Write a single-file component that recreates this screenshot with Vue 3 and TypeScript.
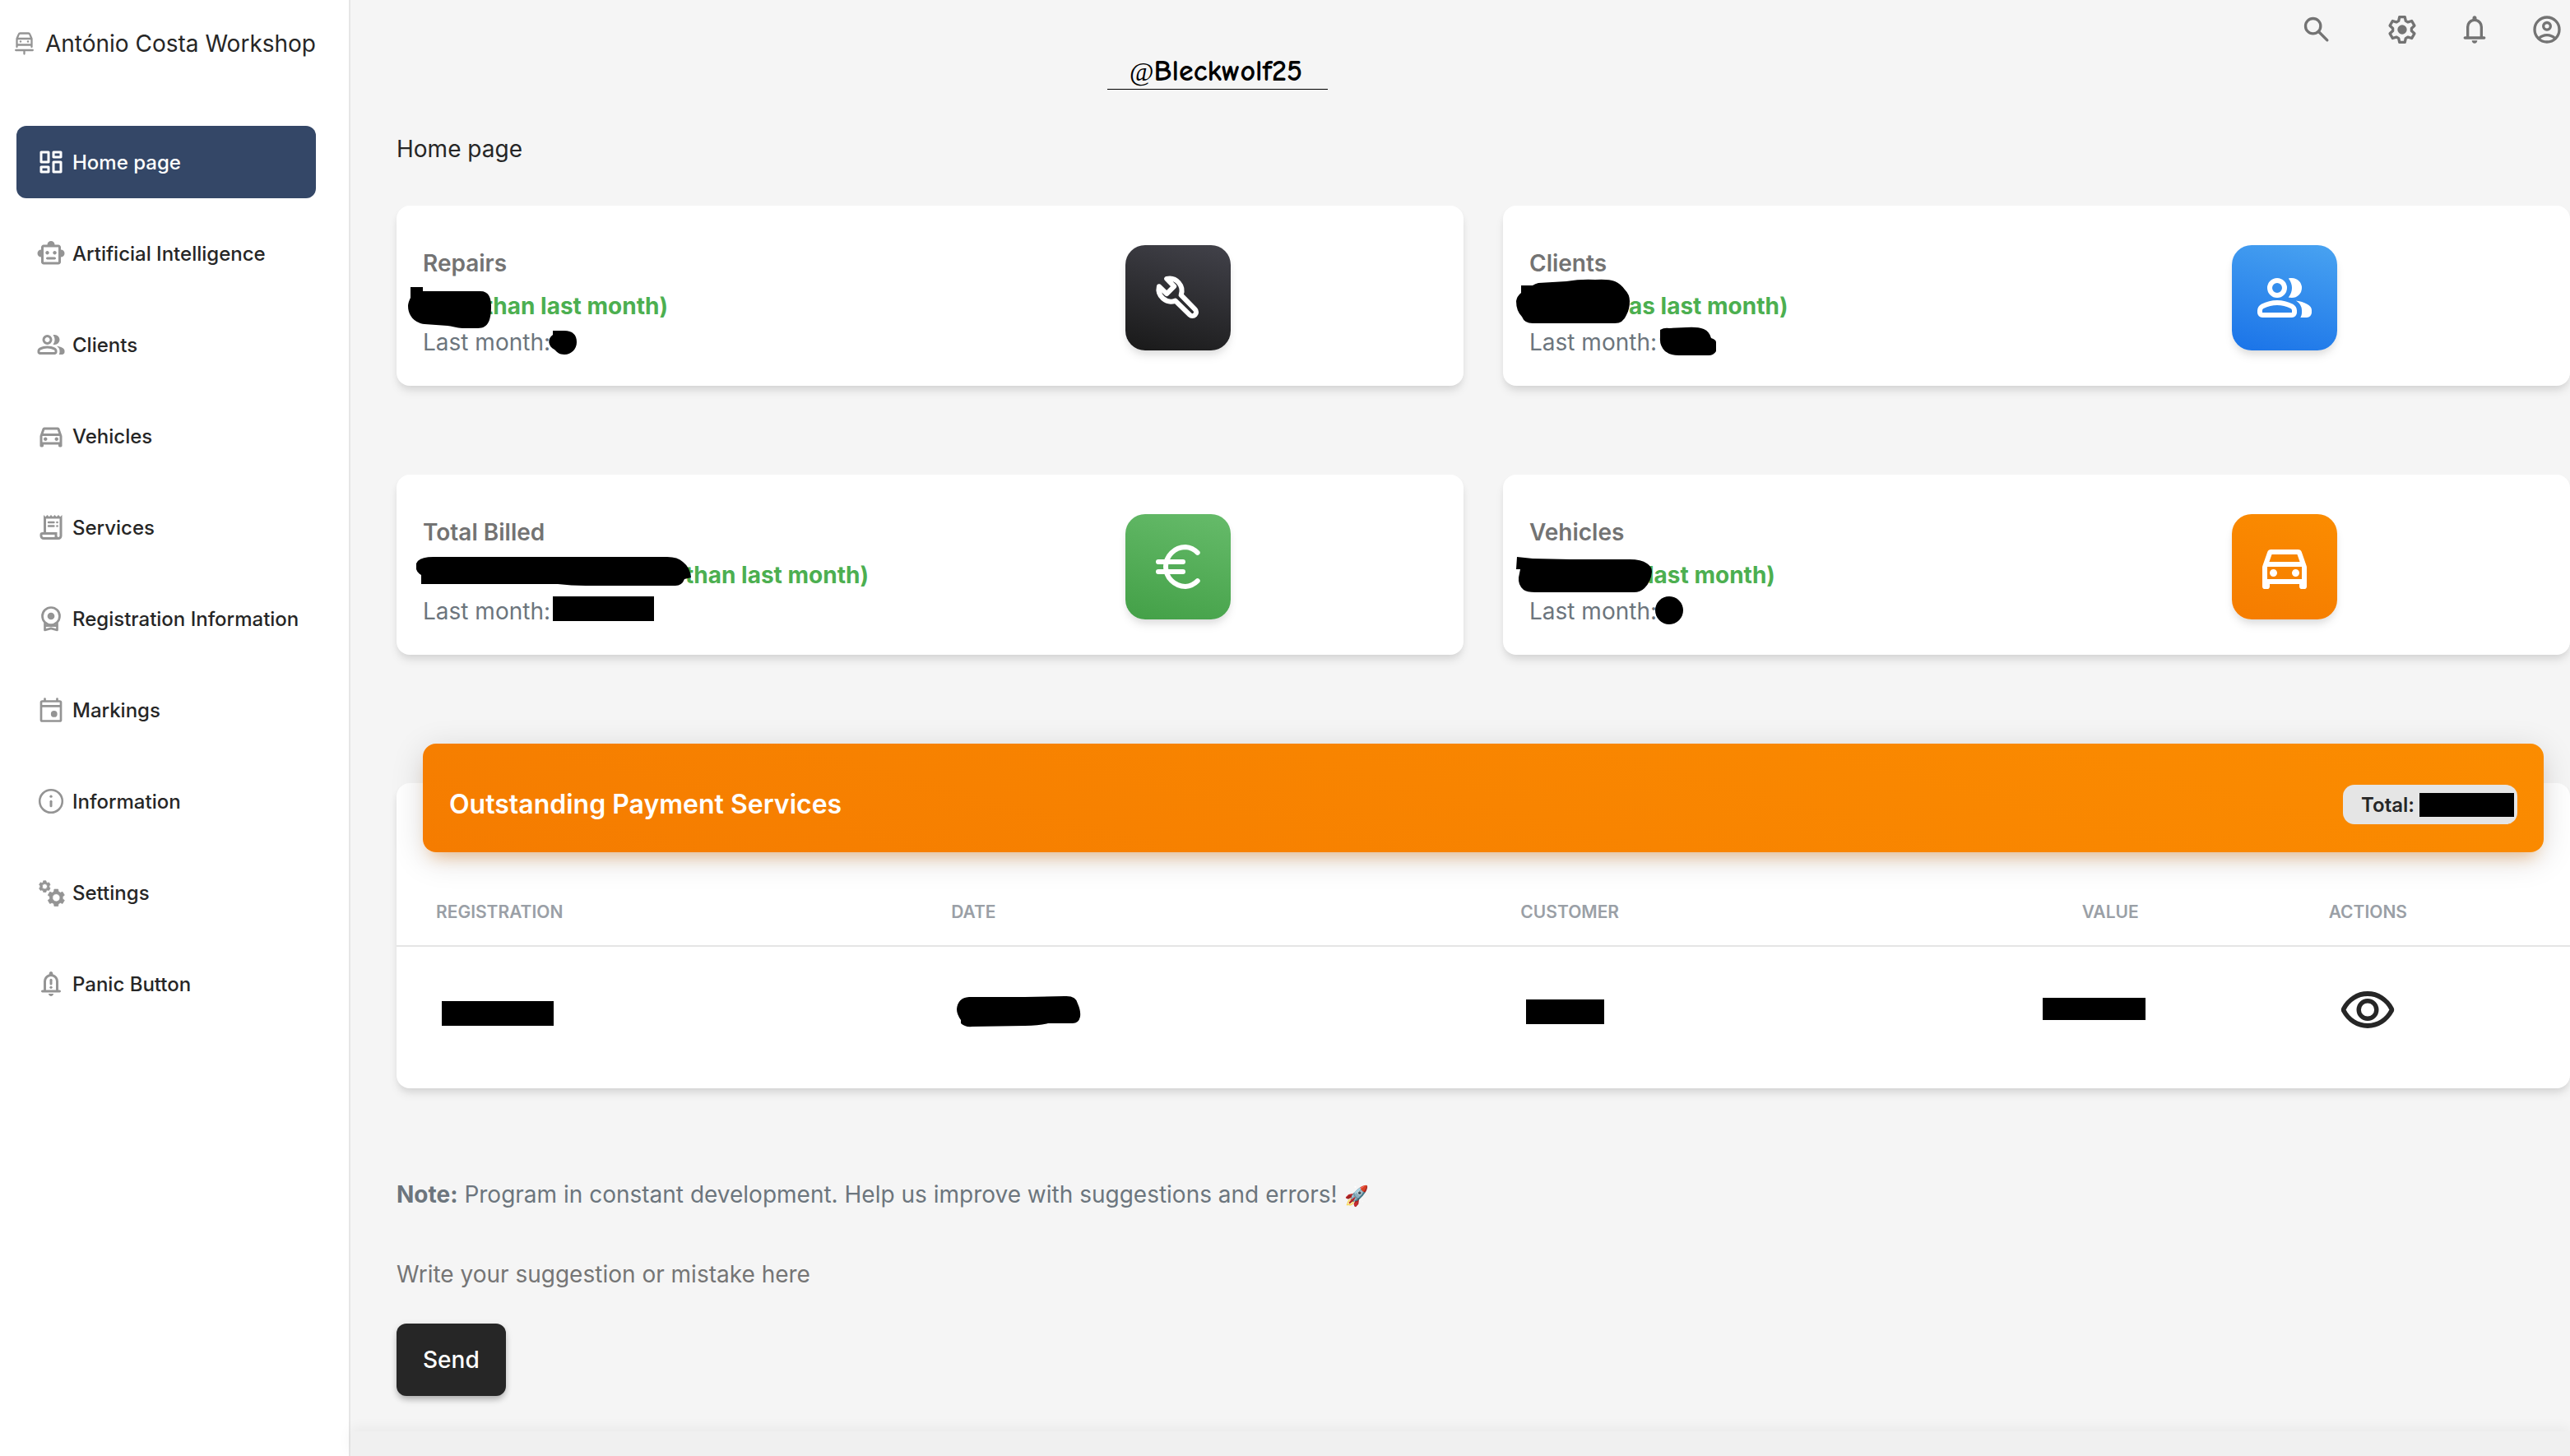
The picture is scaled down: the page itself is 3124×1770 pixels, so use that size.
<script setup lang="ts">
import { h, type FunctionalComponent } from 'vue'

interface Shape {
  d: string
  stroke?: number
}

interface StatCard {
  title: string
  trend: string
  hidden: number
  tone: string
  icon: string
  marks: string[]
}

const disc = (cx: number, cy: number, r: number): string =>
  `M${cx - r} ${cy}a${r} ${r} 0 1 0 ${2 * r} 0a${r} ${r} 0 1 0 ${-2 * r} 0z`

// Six-toothed cog; the angles are half widths of a tooth, in degrees
const cog = (cx: number, cy: number, outer: number, inner: number, tip: number, base: number): string => {
  const at = (deg: number, r: number): string => {
    const a = ((deg - 90) * Math.PI) / 180
    return `${(cx + r * Math.cos(a)).toFixed(2)} ${(cy + r * Math.sin(a)).toFixed(2)}`
  }
  const points: string[] = []
  for (let i = 0; i < 6; i++) {
    const mid = i * 60
    points.push(at(mid - base, inner), at(mid - tip, outer), at(mid + tip, outer), at(mid + base, inner))
  }
  return `M${points.join('L')}Z`
}

const bell =
  'M5 19q-.425 0-.712-.288T4 18t.288-.712T5 17h1v-7q0-2.075 1.25-3.687T10.5 4.2v-.7q0-.625.438-1.062T12 2t1.063.438T13.5 3.5v.7q2 .5 3.25 2.113T18 10v7h1q.425 0 .713.288T20 18t-.288.713T19 19zm7 3q-.825 0-1.412-.587T10 20h4q0 .825-.587 1.413T12 22m-4-5h8v-7q0-1.65-1.175-2.825T12 6T9.175 7.175T8 10z'

const icons: Record<string, Shape[]> = {
  dashboard: [
    {
      d: 'M13 8V4q0-.425.288-.712T14 3h6q.425 0 .713.288T21 4v4q0 .425-.288.713T20 9h-6q-.425 0-.712-.288T13 8M3 12V4q0-.425.288-.712T4 3h6q.425 0 .713.288T11 4v8q0 .425-.288.713T10 13H4q-.425 0-.712-.288T3 12m10 8v-8q0-.425.288-.712T14 11h6q.425 0 .713.288T21 12v8q0 .425-.288.713T20 21h-6q-.425 0-.712-.288T13 20M3 20v-4q0-.425.288-.712T4 15h6q.425 0 .713.288T11 16v4q0 .425-.288.713T10 21H4q-.425 0-.712-.288T3 20m2-9h4V5H5zm10 8h4v-6h-4zm0-12h4V5h-4zM5 19h4v-2H5z',
    },
  ],
  robot: [
    {
      d: 'M4 15q-1.25 0-2.125-.875T1 12t.875-2.125T4 9V7q0-.825.588-1.412T6 5h3q0-1.25.875-2.125T12 2t2.125.875T15 5h3q.825 0 1.413.588T20 7v2q1.25 0 2.125.875T23 12t-.875 2.125T20 15v4q0 .825-.587 1.413T18 21H6q-.825 0-1.412-.587T4 19zm5-2q.625 0 1.063-.437T10.5 11.5t-.437-1.062T9 10t-1.062.438T7.5 11.5t.438 1.063T9 13m6 0q.625 0 1.063-.437T16.5 11.5t-.437-1.062T15 10t-1.062.438T13.5 11.5t.438 1.063T15 13m-6 4h6q.425 0 .713-.288T16 16t-.288-.712T15 15H9q-.425 0-.712.288T8 16t.288.713T9 17m-3 2h12V7H6z',
    },
  ],
  group: [
    {
      d: 'M1 17.2q0-.85.438-1.562T2.6 14.55q1.55-.775 3.15-1.162T9 13t3.25.388t3.15 1.162q.725.375 1.163 1.088T17 17.2v.8q0 .825-.587 1.413T15 20H3q-.825 0-1.412-.587T1 18zM18.45 20q.275-.45.413-.962T19 18v-1q0-1.1-.612-2.113T16.65 13.15q1.275.15 2.4.513t2.1.887q.9.5 1.375 1.112T23 17v1q0 .825-.587 1.413T21 20zM9 12q-1.65 0-2.825-1.175T5 8t1.175-2.825T9 4t2.825 1.175T13 8t-1.175 2.825T9 12m10-4q0 1.65-1.175 2.825T15 12q-.275 0-.7-.062t-.7-.138q.675-.8 1.038-1.775T15 8t-.362-2.025T13.6 4.2q.35-.125.7-.162T15 4q1.65 0 2.825 1.175T19 8M3 18h12v-.8q0-.275-.137-.5t-.363-.35q-1.35-.675-2.725-1.012T9 15t-2.775.338T3.5 16.35q-.225.125-.363.35T3 17.2zm6-8q.825 0 1.413-.587T11 8t-.587-1.412T9 6t-1.412.588T7 8t.588 1.413T9 10',
    },
  ],
  car: [
    {
      d: 'M6 19v1q0 .425-.288.713T5 21H4q-.425 0-.712-.288T3 20v-7.675q0-.175.025-.35t.075-.325l1.975-5.675q.15-.45.538-.712T6.475 5h11.05q.475 0 .863.263t.537.712L20.9 11.65q.05.15.075.325t.025.35V20q0 .425-.288.713T20 21h-1q-.425 0-.712-.288T18 20v-1zm-.2-9h12.4l-1.05-3H6.85zM7.5 16q.625 0 1.063-.437T9 14.5t-.437-1.062T7.5 13t-1.062.438T6 14.5t.438 1.063T7.5 16m9 0q.625 0 1.063-.437T18 14.5t-.437-1.062T16.5 13t-1.062.438T15 14.5t.438 1.063T16.5 16M5 17h14v-5H5z',
    },
  ],
  receipt: [
    {
      d: 'M6 2l1.5 1.5L9 2l1.5 1.5L12 2l1.5 1.5L15 2l1.5 1.5L18 2l1.5 1.5L21 2v17q0 1.25-.875 2.125T18 22H6q-1.25 0-2.125-.875T3 19v-1q0-2 2-2h1zM18 20q.425 0 .713-.288T19 19V5H8v11h9v3q0 .425.288.713T18 20M5 19q0 .425.288.713T6 20h9v-2H5z',
    },
    { d: 'M10 8h4.300M10 11h4.300', stroke: 1.6 },
    { d: disc(17, 8, 0.9) + disc(17, 11, 0.9) },
  ],
  badge: [
    { d: disc(12, 10, 7), stroke: 1.8 },
    { d: disc(12, 10, 2.9) },
    { d: 'M7 16v5.300l5-1.400l5 1.400V16M7.500 17.800h9', stroke: 1.8 },
  ],
  calendar: [
    { d: 'M4.900 5h14.200q.9 0 .9.900v14.200q0 .9-.9.900H4.900q-.9 0-.9-.9V5.900q0-.9.900-.9zM4 8.900h16M7 3v2M17 3v2', stroke: 1.8 },
    { d: disc(14.5, 15.3, 2.6) },
  ],
  info: [
    { d: disc(12, 12, 9.2), stroke: 1.7 },
    { d: 'M12 12.100v3.700', stroke: 2 },
    { d: disc(12, 8.100, 1.1) },
  ],
  cogs: [
    { d: cog(6.9, 7.1, 4.7, 3.7, 13, 20) + disc(6.9, 7.1, 2.1), stroke: 0.5 },
    { d: cog(6.9, 7.1, 4.7, 3.7, 13, 20) + disc(6.9, 7.1, 2.1) },
    { d: cog(16.2, 16.2, 7, 5.3, 13, 20) + disc(16.2, 16.2, 3.1), stroke: 0.5 },
    { d: cog(16.2, 16.2, 7, 5.3, 13, 20) + disc(16.2, 16.2, 3.1) },
  ],
  alarm: [{ d: bell }, { d: 'M12 8.800v3.200', stroke: 2 }, { d: disc(12, 14.9, 1.1) }],
  bell: [{ d: bell }],
  search: [{ d: disc(9.4, 9.4, 5.5), stroke: 2 }, { d: 'M13.500 13.500l6.200 6.200', stroke: 2 }],
  cog: [{ d: cog(12, 12, 9.4, 6.9, 12, 22), stroke: 2 }, { d: disc(12, 12, 3.4) }],
  account: [
    { d: disc(12, 12, 9), stroke: 2 },
    { d: disc(12, 9.5, 2.6), stroke: 2 },
    { d: 'M6 18.500q2.600-2.500 6-2.500t6 2.500', stroke: 2 },
  ],
  wrench: [
    {
      d: 'M7.400 4.300A5 5 0 0 1 13.200 10.900L18.900 16.700A1.500 1.500 0 0 1 16.700 18.900L10.900 13.200A5 5 0 0 1 4.300 7.400L7.400 10.400L10.400 7.400Z',
      stroke: 2,
    },
  ],
  euro: [
    { d: 'M19.900 6.300A7.800 7.800 0 0 0 15 4a8 8 0 0 0 0 16a7.800 7.800 0 0 0 4.900-2.300M4 10h10M4 14h10', stroke: 2 },
  ],
  eye: [
    {
      d: 'M12 16q1.875 0 3.188-1.312T16.500 11.500t-1.312-3.187T12 7T8.813 8.313T7.500 11.500t1.313 3.188T12 16m0-1.800q-1.125 0-1.912-.788T9.300 11.500t.788-1.912T12 8.800t1.913.788t.787 1.912t-.787 1.913T12 14.200m0 4.800q-3.350 0-6.113-1.800t-4.362-4.750q-.125-.225-.187-.462t-.063-.488t.063-.488t.187-.462Q3.125 7.600 5.888 5.800T12 4t6.113 1.800t4.362 4.750q.125.225.188.463t.062.487t-.062.488t-.188.462q-1.600 2.950-4.362 4.750T12 19m0-2q2.825 0 5.188-1.488T20.800 11.500q-1.250-2.525-3.613-4.012T12 6T6.813 7.488T3.200 11.500q1.250 2.525 3.613 4.013T12 17',
    },
  ],
}

const AppIcon: FunctionalComponent<{ name: string; size: number }> = (props) =>
  h(
    'svg',
    { width: props.size, height: props.size, viewBox: '0 0 24 24', 'aria-hidden': 'true' },
    icons[props.name].map((shape) =>
      shape.stroke
        ? h('path', {
            d: shape.d,
            fill: 'none',
            stroke: 'currentColor',
            'stroke-width': shape.stroke,
            'stroke-linecap': 'round',
            'stroke-linejoin': 'round',
          })
        : h('path', { d: shape.d, fill: 'currentColor', 'fill-rule': 'evenodd' }),
    ),
  )
AppIcon.props = ['name', 'size']

const navItems = [
  { label: 'Home page', icon: 'dashboard' },
  { label: 'Artificial Intelligence', icon: 'robot' },
  { label: 'Clients', icon: 'group' },
  { label: 'Vehicles', icon: 'car' },
  { label: 'Services', icon: 'receipt' },
  { label: 'Registration Information', icon: 'badge' },
  { label: 'Markings', icon: 'calendar' },
  { label: 'Information', icon: 'info' },
  { label: 'Settings', icon: 'cogs' },
  { label: 'Panic Button', icon: 'alarm' },
]

// hidden: width of the withheld figure in front of the trend text
const stats: StatCard[] = [
  {
    title: 'Repairs',
    trend: 'than last month)',
    hidden: 75,
    tone: 'dark',
    icon: 'wrench',
    marks: [
      'M17 99h15v5h70C112 104 115 112 115 122C115 138 112 149 99 149H80C74 149 66 146 62 146L34 144C20 142 14 132 14 122C14 118 17 112 17 112Z',
      'M190 152h14c10 0 15 5 15 14c0 8-6 15-15 15c-6 0-9-3-12-6c-8-4-9-13-2-18z',
    ],
  },
  {
    title: 'Clients',
    trend: 'as last month)',
    hidden: 121,
    tone: 'blue',
    icon: 'group',
    marks: [
      'M22 97H36Q39 95 43 94L77 92Q95 89 112 90Q128 89 136 92Q143 95 148 102Q154 108 154 116Q154 126 150 133Q146 143 136 143H36Q26 143 23 135Q16 128 16 116Q17 110 22 106Z',
      'M191 151Q196 148 202 149L223 148Q236 147 244 150Q251 153 253 161Q259 163 259 166V177Q256 182 250 182H214Q203 182 197 177Q190 170 191 160Z',
    ],
  },
  {
    title: 'Total Billed',
    trend: 'than last month)',
    hidden: 319,
    tone: 'green',
    icon: 'euro',
    marks: [
      'M24 115V108Q27 100 45 100H329Q342 100 348 106Q357 113 358 125L350 127Q347 135 339 135H230Q212 135 196 133H30V122Q25 119 24 115Z',
      'M190 148H313V178H190Z',
    ],
  },
  {
    title: 'Vehicles',
    trend: 'last month)',
    hidden: 144,
    tone: 'orange',
    icon: 'car',
    marks: [
      'M17 100L36 102L82 103H154Q168 103 175 108Q181 112 181 118Q180 130 172 138Q167 143 159 143H39Q29 143 25 140Q18 134 19 125L21 115H16Z',
      disc(202, 165, 17),
    ],
  },
]
</script>

<template>
  <div class="app">
    <aside class="sidebar">
      <a class="brand" href="#">
        <svg class="brand-icon" width="24" height="28" viewBox="0 0 24 28" aria-hidden="true">
          <path
            d="M2.500 18V8L4.800 2.600Q5.200 1.500 6.500 1.500H16.500Q17.800 1.500 18.200 2.600L20.500 8V18M2.500 8H20.500M2.500 15.500H20.500M1.200 22H21.800M11.500 22V26.500"
          />
          <circle cx="7" cy="11.500" r="1.200" />
          <circle cx="16" cy="11.500" r="1.200" />
        </svg>
        <span>António Costa Workshop</span>
      </a>
      <nav class="nav" aria-label="Main">
        <a v-for="(item, i) in navItems" :key="item.label" href="#" class="nav-link" :class="{ active: i === 0 }">
          <AppIcon :name="item.icon" :size="36" />
          <span>{{ item.label }}</span>
        </a>
      </nav>
    </aside>

    <div class="main">
      <header class="topbar">
        <p class="handle"><span class="at">@</span>Bleckwolf25</p>
        <div class="tools">
          <button type="button" class="icon-button search" aria-label="Search"><AppIcon name="search" :size="40" /></button>
          <button type="button" class="icon-button" aria-label="Settings"><AppIcon name="cog" :size="40" /></button>
          <button type="button" class="icon-button" aria-label="Notifications"><AppIcon name="bell" :size="40" /></button>
          <button type="button" class="icon-button" aria-label="Account"><AppIcon name="account" :size="40" /></button>
        </div>
      </header>

      <main class="content">
        <h1 class="page-title">Home page</h1>

        <section class="stats">
          <article v-for="card in stats" :key="card.title" class="card stat">
            <div class="stat-row">
              <div class="stat-text">
                <h2>{{ card.title }}</h2>
                <p class="trend"><span class="withheld" :style="{ width: card.hidden + 'px' }"></span>{{ card.trend }}</p>
                <p class="previous">Last month:</p>
              </div>
              <div class="stat-side">
                <div class="tile" :class="card.tone"><AppIcon :name="card.icon" :size="72" /></div>
              </div>
            </div>
            <svg class="marks" width="400" height="219" viewBox="0 0 400 219" aria-hidden="true">
              <path v-for="mark in card.marks" :key="mark" :d="mark" />
            </svg>
          </article>
        </section>

        <section class="card payments">
          <div class="payments-head">
            <h2>Outstanding Payment Services</h2>
            <span class="total">Total:<i class="bar"></i></span>
          </div>
          <table>
            <thead>
              <tr>
                <th class="registration">Registration</th>
                <th class="date">Date</th>
                <th class="customer">Customer</th>
                <th class="value">Value</th>
                <th class="actions">Actions</th>
              </tr>
            </thead>
            <tbody>
              <tr>
                <td><svg width="144" height="72" viewBox="0 0 144 72" aria-hidden="true"><path d="M7 24H143V54H7Z" /></svg></td>
                <td>
                  <svg width="160" height="72" viewBox="0 0 160 72" aria-hidden="true">
                    <path d="M22 19L90 19L138 18Q152 17 154 27Q158 36 157 43Q155 52 146 51H118Q108 54 90 54L26 55Q17 56 12 51V47Q7 40 7 34Q8 20 22 19Z" />
                  </svg>
                </td>
                <td><svg width="104" height="72" viewBox="0 0 104 72" aria-hidden="true"><path d="M7 22H102V52H7Z" /></svg></td>
                <td class="value"><svg width="126" height="72" viewBox="0 0 126 72" aria-hidden="true"><path d="M1 20H126V47H1Z" /></svg></td>
                <td class="actions">
                  <button type="button" class="icon-button view" aria-label="View"><AppIcon name="eye" :size="72" /></button>
                </td>
              </tr>
            </tbody>
          </table>
        </section>

        <form class="feedback" @submit.prevent>
          <p class="note">
            <strong>Note:</strong> Program in constant development. Help us improve with suggestions and errors!
            <span class="rocket">🚀</span>
          </p>
          <input type="text" aria-label="Suggestion" placeholder="Write your suggestion or mistake here" />
          <button type="submit" class="send">Send</button>
        </form>
      </main>

      <footer class="footer"></footer>
    </div>
  </div>
</template>

<style>
body {
  margin: 0;
  background: #f5f5f5;
}
</style>

<style scoped>
.app {
  display: flex;
  min-height: 100vh;
  font-family: Inter, 'Noto Sans', sans-serif;
  font-size: 28px;
  color: #262626;
}

.app * {
  box-sizing: border-box;
}

svg {
  display: block;
  flex: none;
}

h1,
h2,
p {
  margin: 0;
}

a {
  color: inherit;
  text-decoration: none;
}

.sidebar {
  flex: none;
  width: 426px;
  background: #fff;
  border-right: 2px solid #e6e6e6;
}

.brand {
  display: flex;
  align-items: center;
  gap: 13px;
  padding: 31px 0 0 18px;
  line-height: 44px;
  white-space: nowrap;
}

.brand-icon {
  color: #949494;
  fill: currentColor;
}

.brand-icon path {
  fill: none;
  stroke: currentColor;
  stroke-width: 2.3;
  stroke-linecap: round;
  stroke-linejoin: round;
}

.nav {
  display: flex;
  flex-direction: column;
  gap: 23px;
  padding: 78px 40px 0 20px;
}

.nav-link {
  display: flex;
  align-items: center;
  gap: 8px;
  height: 88px;
  padding-left: 24px;
  border-radius: 12px;
  font-size: 24px;
  font-weight: 500;
  white-space: nowrap;
}

.nav-link svg {
  color: #949494;
}

.nav-link.active {
  background: #344767;
  color: #fff;
}

.nav-link.active svg {
  color: #fff;
}

.main {
  flex: 1;
  display: flex;
  flex-direction: column;
  min-width: 0;
}

.topbar {
  display: flex;
  justify-content: space-between;
  align-items: flex-start;
  height: 160px;
  padding: 16px 8px 0 34.1%;
}

.handle {
  display: flex;
  align-items: baseline;
  width: 268px;
  height: 45px;
  margin-top: 48px;
  padding-left: 27px;
  border-bottom: 1px solid #000;
  font-family: 'Comic Sans MS', 'Comic Neue', Lato, sans-serif;
  font-size: 36px;
  font-weight: 900;
  line-height: 46px;
  color: #000;
}

.at {
  font-family: 'Liberation Serif', serif;
  font-size: 32px;
  font-weight: 400;
}

.tools {
  display: flex;
  gap: 48px;
}

.icon-button {
  padding: 0;
  border: 0;
  background: none;
  color: #737373;
}

.icon-button.search {
  margin-right: 16px;
}

.content {
  padding: 0 0 43px 56px;
}

.page-title {
  font-size: 28px;
  font-weight: 400;
  line-height: 42px;
}

.stats {
  display: grid;
  grid-template-columns: 1fr 1fr;
  gap: 108px 48px;
  margin-top: 48px;
}

.card {
  background: #fff;
  border-radius: 16px;
  box-shadow: 0 8px 12px -2px rgba(0, 0, 0, 0.1), 0 4px 8px -2px rgba(0, 0, 0, 0.06);
}

.stat {
  position: relative;
  padding: 48px 32px 31px;
}

.stat-row {
  display: flex;
  margin: 0 -24px;
}

.stat-text {
  width: 66.6667%;
  padding: 0 24px;
  line-height: 44px;
}

.stat-side {
  width: 33.3333%;
  padding: 0 24px;
}

.stat h2 {
  margin-bottom: 8px;
  font-size: 28px;
  font-weight: 600;
  color: #737373;
}

.trend {
  font-weight: 700;
  color: #4caf50;
}

.withheld {
  display: inline-block;
}

.previous {
  color: #6c757d;
}

.tile {
  display: flex;
  align-items: center;
  justify-content: center;
  width: 128px;
  height: 128px;
  border-radius: 24px;
  color: #fff;
  box-shadow: 0 8px 12px -2px rgba(0, 0, 0, 0.1), 0 4px 8px -2px rgba(0, 0, 0, 0.06);
}

.tile.dark {
  background: linear-gradient(195deg, #42424a, #191919);
}

.tile.blue {
  background: linear-gradient(195deg, #49a3f1, #1a73e8);
}

.tile.green {
  background: linear-gradient(195deg, #66bb6a, #43a047);
}

.tile.orange {
  background: linear-gradient(195deg, #fb8c00, #f57c00);
}

.marks {
  position: absolute;
  top: 0;
  left: 0;
  pointer-events: none;
}

.payments {
  margin-top: 156px;
}

.payments-head {
  position: relative;
  top: -48px;
  display: flex;
  align-items: center;
  justify-content: space-between;
  margin: 0 32px -48px;
  padding: 50px 32px 34px;
  border-radius: 16px;
  background: linear-gradient(195deg, #fb8c00, #f57c00);
  box-shadow: 0 8px 40px 0 rgba(0, 0, 0, 0.14), 0 14px 20px -10px rgba(245, 124, 0, 0.4);
  color: #fff;
}

.payments-head h2 {
  font-size: 32px;
  font-weight: 600;
  line-height: 48px;
}

.total {
  display: flex;
  align-items: center;
  gap: 6px;
  height: 48px;
  padding: 0 4px 0 22px;
  border-radius: 14px;
  background: #e5e5e5;
  color: #262626;
  font-size: 24px;
  font-weight: 600;
}

.bar {
  width: 115px;
  height: 29px;
  background: #000;
}

table {
  width: 100%;
  margin-top: 33px;
  border-spacing: 0;
  table-layout: fixed;
}

th {
  padding: 24px 0 24px 48px;
  border-bottom: 2px solid #e5e5e5;
  color: #9a9fa6;
  font-size: 21px;
  font-weight: 600;
  line-height: 32px;
  text-align: left;
  text-transform: uppercase;
}

td {
  height: 172px;
  padding: 42px 0 0 48px;
  vertical-align: top;
}

.registration {
  width: 23.7%;
}

.date {
  width: 26.2%;
}

.customer {
  width: 24.2%;
}

th.value {
  width: 9.5%;
  padding-left: 0;
  text-align: center;
}

td.value {
  padding-left: 0;
  padding-right: 40px;
}

td.value svg {
  margin: 0 auto;
}

.actions {
  padding-left: 0;
  padding-right: 58px;
  text-align: center;
}

.view {
  color: #262626;
}

.feedback {
  display: flex;
  flex-direction: column;
  align-items: flex-start;
  margin-top: 108px;
}

.note {
  height: 42px;
  line-height: 42px;
  color: #6c757d;
}

.rocket {
  font-size: 24px;
}

input {
  width: 100%;
  height: 48px;
  margin-top: 52px;
  padding: 0;
  border: 0;
  outline: 0;
  background: none;
  font: inherit;
  color: #262626;
}

input::placeholder {
  color: #757575;
  opacity: 1;
}

.send {
  height: 88px;
  margin-top: 36px;
  padding: 0 32px;
  border: 0;
  border-radius: 12px;
  background: #262626;
  box-shadow: 0 6px 8px -2px rgba(0, 0, 0, 0.24), 0 2px 8px rgba(0, 0, 0, 0.12);
  color: #fff;
  font: inherit;
  font-weight: 500;
}

.footer {
  flex: 1;
  min-height: 30px;
  background: #f0f0f0;
  box-shadow: 0 -4px 16px rgba(0, 0, 0, 0.05);
}
</style>
